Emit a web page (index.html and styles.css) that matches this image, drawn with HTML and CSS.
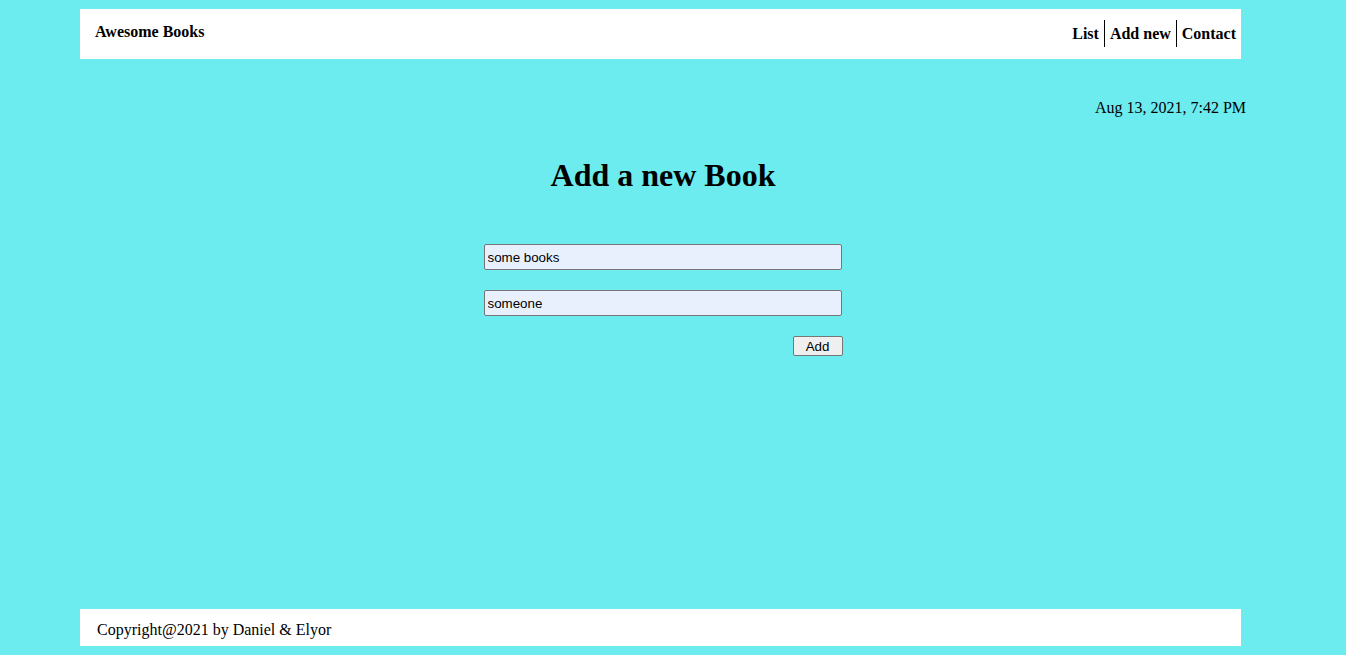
FILE: index.html
```html
<!DOCTYPE html>
<html lang="en">
<head>
<meta charset="utf-8">
<title>Awesome Books</title>
<link rel="stylesheet" href="styles.css">
</head>
<body>
<header class="topbar">
  <span class="brand">Awesome Books</span>
  <nav class="nav">
    <a class="nav-link" href="#">List</a>
    <a class="nav-link sep" href="#">Add new</a>
    <a class="nav-link sep" href="#">Contact</a>
  </nav>
</header>
<main class="main">
  <div class="date">Aug 13, 2021, 7:42 PM</div>
  <h1 class="title">Add a new Book</h1>
  <form class="book-form">
    <input class="field" type="text" value="some books">
    <input class="field" type="text" value="someone">
    <button class="add-btn" type="button">Add</button>
  </form>
</main>
<footer class="footer">Copyright@2021 by Daniel &amp; Elyor</footer>
</body>
</html>
```
FILE: styles.css
```css
html, body {
  margin: 0;
  padding: 0;
}
body {
  background: #6cecef;
  font-family: "Liberation Serif", "Times New Roman", serif;
  font-size: 16px;
  color: #000;
  min-height: 655px;
  display: flex;
  flex-direction: column;
}
.topbar {
  margin: 9px 0 0 80px;
  width: 1161px;
  height: 50px;
  background: #fff;
  display: flex;
  justify-content: space-between;
  align-items: flex-start;
  box-sizing: border-box;
}
.brand {
  font-weight: bold;
  line-height: 18px;
  margin: 14px 0 0 15px;
}
.nav {
  display: flex;
  margin-top: 11px;
}
.nav-link {
  color: #000;
  text-decoration: none;
  font-weight: bold;
  line-height: 18px;
  padding: 5px 5px 4px 5px;
}
.nav-link.sep {
  border-left: 1px solid #000;
}
.main {
  margin-left: 80px;
  width: 1166px;
  display: flex;
  flex-direction: column;
  align-items: center;
}
.date {
  align-self: flex-end;
  line-height: 18px;
  margin-top: 40px;
}
.title {
  font-size: 32px;
  font-weight: bold;
  line-height: 37px;
  margin: 40px 0 0 0;
}
.book-form {
  width: 359px;
  margin-top: 50px;
  display: flex;
  flex-direction: column;
  align-items: flex-start;
  gap: 20px;
}
.field {
  width: 358px;
  height: 26px;
  box-sizing: border-box;
  border: 1px solid #767676;
  border-radius: 2px;
  background: #e8f0fe;
  padding: 1px 3px;
  font-family: "Liberation Sans", Arial, sans-serif;
  font-size: 13.33px;
  color: #000;
  margin: 0;
}
.add-btn {
  align-self: flex-end;
  width: 50px;
  height: 20px;
  box-sizing: border-box;
  border: 1px solid #767676;
  border-radius: 2px;
  background: #efefef;
  font-family: "Liberation Sans", Arial, sans-serif;
  font-size: 13.33px;
  color: #000;
  padding: 0;
  margin: 0;
}
.footer {
  margin: auto 0 9px 80px;
  width: 1161px;
  height: 37px;
  background: #fff;
  box-sizing: border-box;
  padding: 12px 0 0 17px;
  line-height: 18px;
}
```
